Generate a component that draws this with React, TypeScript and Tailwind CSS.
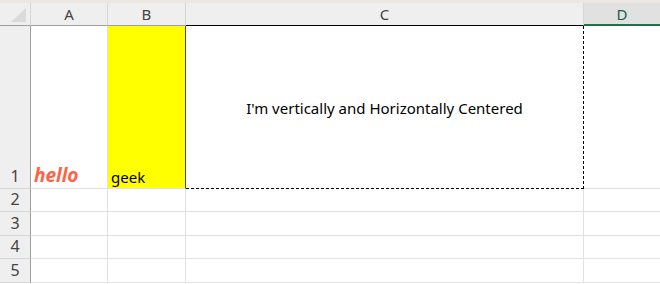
const cols = [
  { key: "A", w: "w-[77px]" },
  { key: "B", w: "w-[78px]" },
  { key: "C", w: "w-[398px]" },
]

function RowHead({ n, h }: { n: number; h: string }) {
  return (
    <div
      className={`${h} w-[31px] shrink-0 border-r border-b border-r-[#9e9e9e] border-b-[#d6d6d6] bg-[#efefef] flex items-end justify-center pb-[1px] text-[16px] leading-[21px] text-[#444]`}
    >
      {n}
    </div>
  )
}

function EmptyRow({ n, h }: { n: number; h: string }) {
  return (
    <div className="flex">
      <RowHead n={n} h={h} />
      <div className={`${h} w-[77px] shrink-0 border-r border-b border-[#e1e1e1]`} />
      <div className={`${h} w-[78px] shrink-0 border-r border-b border-[#e1e1e1]`} />
      <div className={`${h} w-[398px] shrink-0 border-r border-b border-[#e1e1e1]`} />
      <div className={`${h} grow border-b border-[#e1e1e1]`} />
    </div>
  )
}

export default function App() {
  return (
    <div className="w-[660px] h-[284px] overflow-hidden bg-white font-['Noto_Sans',sans-serif]">
      <div className="h-[3px] bg-[#ece8e1]" />

      {/* column headers */}
      <div className="flex h-[23px]">
        <div className="relative w-[31px] shrink-0 border-r border-b border-r-[#d6d6d6] border-b-[#9e9e9e] bg-[#efefef]">
          <svg className="absolute right-[4px] bottom-[3px]" width="15" height="14" viewBox="0 0 15 14">
            <polygon points="15,0 15,14 0,14" fill="#dadada" />
          </svg>
        </div>
        {cols.map((c) => (
          <div
            key={c.key}
            className={`${c.w} shrink-0 border-r border-b border-r-[#d6d6d6] ${
              c.key === "C" ? "border-b-black" : "border-b-[#9e9e9e]"
            } bg-[#efefef] flex items-center justify-center text-[15px] text-[#444]`}
          >
            {c.key}
          </div>
        ))}
        <div className="grow border-b-2 border-[#217346] bg-[#e1e1e1] flex items-center justify-center pt-[1px] text-[15px] text-[#1b5e45]">
          D
        </div>
      </div>

      {/* row 1 */}
      <div className="flex">
        <RowHead n={1} h="h-[163px]" />
        <div className="h-[163px] w-[77px] shrink-0 border-r border-b border-[#e1e1e1] flex items-end pl-[3px] pb-[1px]">
          <span className="font-['Open_Sans',sans-serif] text-[19px] leading-[24px] font-bold italic text-[#ff6347]">
            hello
          </span>
        </div>
        <div className="h-[163px] w-[78px] shrink-0 border-r border-b border-r-[#4a4a4a] border-b-[#e1e1e1] bg-[#ffff00] flex items-end pl-[3px] pb-[1px]">
          <span className="text-[15px] leading-[20px] text-black">geek</span>
        </div>
        <div className="h-[163px] w-[398px] shrink-0 border-r border-b border-dashed border-black flex items-center justify-center pt-[2px]">
          <span className="text-[15px] text-black">I'm vertically and Horizontally Centered</span>
        </div>
        <div className="h-[163px] grow border-b border-[#e1e1e1]" />
      </div>

      <EmptyRow n={2} h="h-[23px]" />
      <EmptyRow n={3} h="h-[24px]" />
      <EmptyRow n={4} h="h-[23px]" />
      <EmptyRow n={5} h="h-[24px]" />
    </div>
  )
}
